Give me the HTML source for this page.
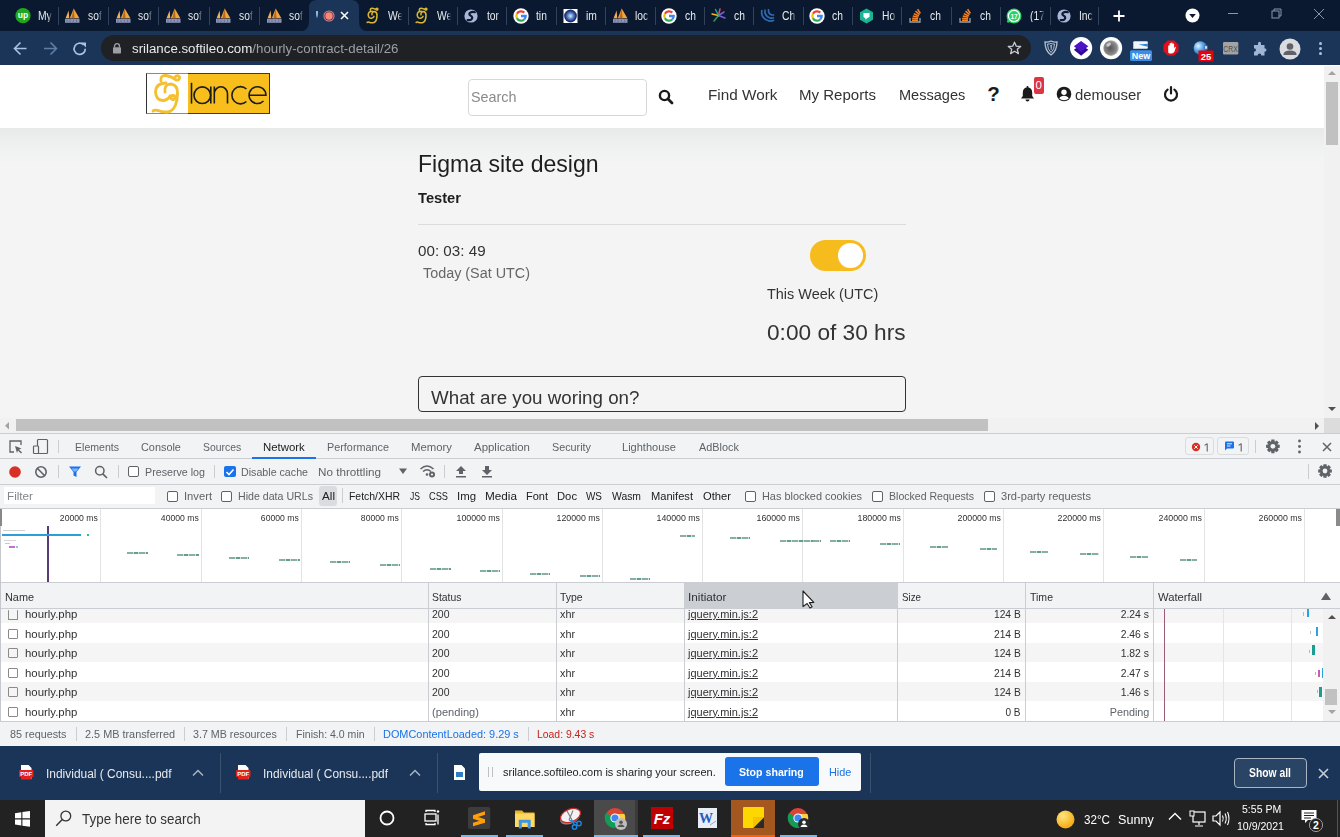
<!DOCTYPE html>
<html><head><meta charset="utf-8"><style>
*{margin:0;padding:0;box-sizing:border-box}
html,body{width:1340px;height:837px;overflow:hidden;background:#fff}
body{position:relative;font-family:"Liberation Sans",sans-serif}
.a{position:absolute}
.t{position:absolute;white-space:nowrap;line-height:1}
svg{position:absolute;overflow:visible}
</style></head><body>
<div class="a" style="left:0px;top:0px;width:1340px;height:31.2px;background:#0a1930;"></div>
<svg style="left:299px;top:0" width="70" height="32"><path d="M0 31.5 Q10 31.5 10 21.5 L10 8 Q10 0 18 0 L52 0 Q60 0 60 8 L60 21.5 Q60 31.5 70 31.5 Z" fill="#1b3558"/></svg>
<div class="a" style="left:57.5px;top:7px;width:1.2px;height:18px;background:#33435b;"></div>
<div class="a" style="left:107.5px;top:7px;width:1.2px;height:18px;background:#33435b;"></div>
<div class="a" style="left:157.5px;top:7px;width:1.2px;height:18px;background:#33435b;"></div>
<div class="a" style="left:208.5px;top:7px;width:1.2px;height:18px;background:#33435b;"></div>
<div class="a" style="left:258.5px;top:7px;width:1.2px;height:18px;background:#33435b;"></div>
<div class="a" style="left:407.5px;top:7px;width:1.2px;height:18px;background:#33435b;"></div>
<div class="a" style="left:456.5px;top:7px;width:1.2px;height:18px;background:#33435b;"></div>
<div class="a" style="left:505.5px;top:7px;width:1.2px;height:18px;background:#33435b;"></div>
<div class="a" style="left:555.5px;top:7px;width:1.2px;height:18px;background:#33435b;"></div>
<div class="a" style="left:604.5px;top:7px;width:1.2px;height:18px;background:#33435b;"></div>
<div class="a" style="left:654.5px;top:7px;width:1.2px;height:18px;background:#33435b;"></div>
<div class="a" style="left:703.5px;top:7px;width:1.2px;height:18px;background:#33435b;"></div>
<div class="a" style="left:752.5px;top:7px;width:1.2px;height:18px;background:#33435b;"></div>
<div class="a" style="left:802.5px;top:7px;width:1.2px;height:18px;background:#33435b;"></div>
<div class="a" style="left:851.5px;top:7px;width:1.2px;height:18px;background:#33435b;"></div>
<div class="a" style="left:900.5px;top:7px;width:1.2px;height:18px;background:#33435b;"></div>
<div class="a" style="left:950.5px;top:7px;width:1.2px;height:18px;background:#33435b;"></div>
<div class="a" style="left:999.5px;top:7px;width:1.2px;height:18px;background:#33435b;"></div>
<div class="a" style="left:1049.5px;top:7px;width:1.2px;height:18px;background:#33435b;"></div>
<div class="a" style="left:1097.5px;top:7px;width:1.2px;height:18px;background:#33435b;"></div>
<div id="t1" class="t" style="top:9.64px;font-size:12px;color:#e8eaed;left:37.6px;width:16.5px;overflow:hidden;-webkit-mask-image:linear-gradient(to right,#000 66%,transparent 98%);transform:scaleX(0.86);transform-origin:left 0;">My</div>
<div id="t2" class="t" style="top:9.64px;font-size:12px;color:#e8eaed;left:87.6px;width:16.5px;overflow:hidden;-webkit-mask-image:linear-gradient(to right,#000 66%,transparent 98%);transform:scaleX(0.86);transform-origin:left 0;">sof</div>
<div id="t3" class="t" style="top:9.64px;font-size:12px;color:#e8eaed;left:137.9px;width:16.5px;overflow:hidden;-webkit-mask-image:linear-gradient(to right,#000 66%,transparent 98%);transform:scaleX(0.86);transform-origin:left 0;">sof</div>
<div id="t4" class="t" style="top:9.64px;font-size:12px;color:#e8eaed;left:188.3px;width:16.5px;overflow:hidden;-webkit-mask-image:linear-gradient(to right,#000 66%,transparent 98%);transform:scaleX(0.86);transform-origin:left 0;">sof</div>
<div id="t5" class="t" style="top:9.64px;font-size:12px;color:#e8eaed;left:238.70000000000002px;width:16.5px;overflow:hidden;-webkit-mask-image:linear-gradient(to right,#000 66%,transparent 98%);transform:scaleX(0.86);transform-origin:left 0;">sof</div>
<div id="t6" class="t" style="top:9.64px;font-size:12px;color:#e8eaed;left:288.90000000000003px;width:16.5px;overflow:hidden;-webkit-mask-image:linear-gradient(to right,#000 66%,transparent 98%);transform:scaleX(0.86);transform-origin:left 0;">sof</div>
<div id="t7" class="t" style="top:9.64px;font-size:12px;color:#e8eaed;left:387.90000000000003px;width:16.5px;overflow:hidden;-webkit-mask-image:linear-gradient(to right,#000 66%,transparent 98%);transform:scaleX(0.86);transform-origin:left 0;">We</div>
<div id="t8" class="t" style="top:9.64px;font-size:12px;color:#e8eaed;left:437.2px;width:16.5px;overflow:hidden;-webkit-mask-image:linear-gradient(to right,#000 66%,transparent 98%);transform:scaleX(0.86);transform-origin:left 0;">We</div>
<div id="t9" class="t" style="top:9.64px;font-size:12px;color:#e8eaed;left:486.7px;width:16.5px;overflow:hidden;-webkit-mask-image:linear-gradient(to right,#000 66%,transparent 98%);transform:scaleX(0.86);transform-origin:left 0;">tor</div>
<div id="t10" class="t" style="top:9.64px;font-size:12px;color:#e8eaed;left:536.1999999999999px;width:16.5px;overflow:hidden;-webkit-mask-image:linear-gradient(to right,#000 66%,transparent 98%);transform:scaleX(0.86);transform-origin:left 0;">tin</div>
<div id="t11" class="t" style="top:9.64px;font-size:12px;color:#e8eaed;left:585.6999999999999px;width:16.5px;overflow:hidden;-webkit-mask-image:linear-gradient(to right,#000 66%,transparent 98%);transform:scaleX(0.86);transform-origin:left 0;">im</div>
<div id="t12" class="t" style="top:9.64px;font-size:12px;color:#e8eaed;left:635.0999999999999px;width:16.5px;overflow:hidden;-webkit-mask-image:linear-gradient(to right,#000 66%,transparent 98%);transform:scaleX(0.86);transform-origin:left 0;">loc</div>
<div id="t13" class="t" style="top:9.64px;font-size:12px;color:#e8eaed;left:684.6999999999999px;width:16.5px;overflow:hidden;-webkit-mask-image:linear-gradient(to right,#000 66%,transparent 98%);transform:scaleX(0.86);transform-origin:left 0;">ch</div>
<div id="t14" class="t" style="top:9.64px;font-size:12px;color:#e8eaed;left:733.6999999999999px;width:16.5px;overflow:hidden;-webkit-mask-image:linear-gradient(to right,#000 66%,transparent 98%);transform:scaleX(0.86);transform-origin:left 0;">ch</div>
<div id="t15" class="t" style="top:9.64px;font-size:12px;color:#e8eaed;left:782.4px;width:16.5px;overflow:hidden;-webkit-mask-image:linear-gradient(to right,#000 66%,transparent 98%);transform:scaleX(0.86);transform-origin:left 0;">Ch</div>
<div id="t16" class="t" style="top:9.64px;font-size:12px;color:#e8eaed;left:832.1999999999999px;width:16.5px;overflow:hidden;-webkit-mask-image:linear-gradient(to right,#000 66%,transparent 98%);transform:scaleX(0.86);transform-origin:left 0;">ch</div>
<div id="t17" class="t" style="top:9.64px;font-size:12px;color:#e8eaed;left:881.5999999999999px;width:16.5px;overflow:hidden;-webkit-mask-image:linear-gradient(to right,#000 66%,transparent 98%);transform:scaleX(0.86);transform-origin:left 0;">Ho</div>
<div id="t18" class="t" style="top:9.64px;font-size:12px;color:#e8eaed;left:930.3px;width:16.5px;overflow:hidden;-webkit-mask-image:linear-gradient(to right,#000 66%,transparent 98%);transform:scaleX(0.86);transform-origin:left 0;">ch</div>
<div id="t19" class="t" style="top:9.64px;font-size:12px;color:#e8eaed;left:979.9px;width:16.5px;overflow:hidden;-webkit-mask-image:linear-gradient(to right,#000 66%,transparent 98%);transform:scaleX(0.86);transform-origin:left 0;">ch</div>
<div id="t20" class="t" style="top:9.64px;font-size:12px;color:#e8eaed;left:1029.8px;width:16.5px;overflow:hidden;-webkit-mask-image:linear-gradient(to right,#000 66%,transparent 98%);transform:scaleX(0.86);transform-origin:left 0;">(17</div>
<div id="t21" class="t" style="top:9.64px;font-size:12px;color:#e8eaed;left:1078.8px;width:16.5px;overflow:hidden;-webkit-mask-image:linear-gradient(to right,#000 66%,transparent 98%);transform:scaleX(0.86);transform-origin:left 0;">Inc</div>
<div class="a" style="left:0px;top:31.2px;width:1340px;height:34.3px;background:#1b3558;"></div>
<div class="a" style="left:101px;top:35.3px;width:930px;height:25.5px;background:#202124;border-radius:13px;"></div>
<div id="t22" class="t" style="top:42.72px;font-size:12.5px;color:#e8eaed;left:132px;transform:scaleX(1.0625);transform-origin:left 0;">srilance.softileo.com<span style="color:#9aa0a6">/hourly-contract-detail/26</span></div>
<div class="a" style="left:0px;top:65.5px;width:1324px;height:62.5px;background:#ffffff;"></div>
<div class="a" style="left:0px;top:128px;width:1324px;height:290px;background:#f4f4f4;"></div>
<div class="a" style="left:0px;top:128px;width:1324px;height:36px;background:linear-gradient(#e8eaea,#eef0f0 40%,#f4f4f4);"></div>
<div class="a" style="left:146px;top:72.5px;width:124px;height:41px;background:#ffffff;border:1px solid #333;border-top-color:#8a8a8a;border-bottom-color:#8a8a8a;"></div>
<div class="a" style="left:188px;top:72.5px;width:82px;height:1px;background:#4a3a10;"></div>
<div class="a" style="left:188px;top:112.5px;width:82px;height:1px;background:#4a3a10;"></div>
<div class="a" style="left:188px;top:73.5px;width:81px;height:39px;background:#f8bf1c;"></div>
<div class="a" style="left:468px;top:79px;width:179px;height:36.5px;background:#ffffff;border:1px solid #d8d8d8;border-radius:4px;"></div>
<div id="t23" class="t" style="top:89.73px;font-size:14.5px;color:#8a8a8a;left:470.5px;transform:scaleX(0.9901);transform-origin:left 0;">Search</div>
<div id="t24" class="t" style="top:87.65px;font-size:14px;color:#333;left:707.6px;transform:scaleX(1.0921);transform-origin:left 0;">Find Work</div>
<div id="t25" class="t" style="top:87.65px;font-size:14px;color:#333;left:799.3px;transform:scaleX(1.0744);transform-origin:left 0;">My Reports</div>
<div id="t26" class="t" style="top:87.65px;font-size:14px;color:#333;left:898.7px;transform:scaleX(1.0390);transform-origin:left 0;">Messages</div>
<div id="t27" class="t" style="top:87.65px;font-size:14px;color:#333;left:1074.8px;transform:scaleX(1.0632);transform-origin:left 0;">demouser</div>
<div id="t28" class="t" style="top:152.48px;font-size:24px;color:#1e1e1e;left:418.4px;transform:scaleX(0.9602);transform-origin:left 0;">Figma site design</div>
<div id="t29" class="t" style="top:190.30px;font-size:15px;color:#1e1e1e;font-weight:700;left:418.4px;transform:scaleX(0.9790);transform-origin:left 0;">Tester</div>
<div class="a" style="left:418px;top:223.5px;width:488px;height:1px;background:#dcdcdc;"></div>
<div id="t30" class="t" style="top:244.15px;font-size:14px;color:#333;left:418.4px;transform:scaleX(1.0854);transform-origin:left 0;">00: 03: 49</div>
<div id="t31" class="t" style="top:266.15px;font-size:14px;color:#666;left:423px;transform:scaleX(1.0264);transform-origin:left 0;">Today (Sat UTC)</div>
<div class="a" style="left:810.3px;top:240px;width:56px;height:31.4px;background:#f6bc1e;border-radius:16px;"></div>
<div class="a" style="left:838.2px;top:243.4px;width:24.4px;height:24.4px;border-radius:50%;background:#fff"></div>
<div id="t32" class="t" style="top:285.90px;font-size:15px;color:#333;left:766.8px;transform:scaleX(0.9622);transform-origin:left 0;">This Week (UTC)</div>
<div id="t33" class="t" style="top:323.00px;font-size:21.5px;color:#333;left:767px;transform:scaleX(1.0541);transform-origin:left 0;">0:00 of 30 hrs</div>
<div class="a" style="left:418px;top:376px;width:488px;height:36.4px;background:#f4f4f4;border:1.5px solid #333;border-radius:4px;"></div>
<div id="t34" class="t" style="top:389.99px;font-size:17.5px;color:#333;left:431.2px;transform:scaleX(1.0716);transform-origin:left 0;">What are you woring on?</div>
<div class="a" style="left:1324px;top:65.5px;width:16px;height:352.5px;background:#f1f1f1;"></div>
<div class="a" style="left:1326px;top:82px;width:12px;height:63px;background:#c1c1c1;"></div>
<div class="a" style="left:0px;top:418px;width:1324px;height:15px;background:#f1f1f1;"></div>
<div class="a" style="left:16px;top:419.1px;width:972px;height:12.2px;background:#c1c1c1;"></div>
<div class="a" style="left:1324px;top:418px;width:16px;height:15px;background:#dcdcdc;"></div>
<div class="a" style="left:0px;top:433px;width:1340px;height:313.3px;background:#f1f3f4;"></div>
<div class="a" style="left:0px;top:433px;width:1340px;height:1px;background:#cacdd1;"></div>
<div class="a" style="left:0px;top:458px;width:1340px;height:1px;background:#cacdd1;"></div>
<div class="a" style="left:0px;top:483.5px;width:1340px;height:1px;background:#cacdd1;"></div>
<div id="t35" class="t" style="top:441.99px;font-size:11px;color:#5f6368;left:75px;transform:scaleX(0.9595);transform-origin:left 0;">Elements</div>
<div id="t36" class="t" style="top:441.99px;font-size:11px;color:#5f6368;left:140.8px;transform:scaleX(0.9886);transform-origin:left 0;">Console</div>
<div id="t37" class="t" style="top:441.99px;font-size:11px;color:#5f6368;left:202.6px;transform:scaleX(0.9440);transform-origin:left 0;">Sources</div>
<div id="t38" class="t" style="top:441.99px;font-size:11px;color:#202124;left:263px;transform:scaleX(1.0361);transform-origin:left 0;">Network</div>
<div id="t39" class="t" style="top:441.99px;font-size:11px;color:#5f6368;left:327px;transform:scaleX(0.9844);transform-origin:left 0;">Performance</div>
<div id="t40" class="t" style="top:441.99px;font-size:11px;color:#5f6368;left:411px;transform:scaleX(1.0319);transform-origin:left 0;">Memory</div>
<div id="t41" class="t" style="top:441.99px;font-size:11px;color:#5f6368;left:474px;transform:scaleX(1.0403);transform-origin:left 0;">Application</div>
<div id="t42" class="t" style="top:441.99px;font-size:11px;color:#5f6368;left:552px;transform:scaleX(0.9811);transform-origin:left 0;">Security</div>
<div id="t43" class="t" style="top:441.99px;font-size:11px;color:#5f6368;left:622px;transform:scaleX(1.0032);transform-origin:left 0;">Lighthouse</div>
<div id="t44" class="t" style="top:441.99px;font-size:11px;color:#5f6368;left:698.6px;transform:scaleX(0.9886);transform-origin:left 0;">AdBlock</div>
<div class="a" style="left:252px;top:457px;width:64.4px;height:2px;background:#1a73e8;"></div>
<div id="t45" class="t" style="top:466.59px;font-size:11px;color:#5f6368;left:145px;transform:scaleX(0.9714);transform-origin:left 0;">Preserve log</div>
<div id="t46" class="t" style="top:466.59px;font-size:11px;color:#5f6368;left:241px;transform:scaleX(0.9697);transform-origin:left 0;">Disable cache</div>
<div id="t47" class="t" style="top:466.59px;font-size:11px;color:#5f6368;left:318px;transform:scaleX(1.0622);transform-origin:left 0;">No throttling</div>
<div class="a" style="left:4px;top:487px;width:151px;height:16.7px;background:#ffffff;"></div>
<div id="t48" class="t" style="top:491.39px;font-size:11px;color:#80868b;left:7px;transform:scaleX(1.0633);transform-origin:left 0;">Filter</div>
<div id="t49" class="t" style="top:491.39px;font-size:11px;color:#5f6368;left:184px;transform:scaleX(1.0176);transform-origin:left 0;">Invert</div>
<div id="t50" class="t" style="top:491.39px;font-size:11px;color:#5f6368;left:238px;transform:scaleX(0.9658);transform-origin:left 0;">Hide data URLs</div>
<div class="a" style="left:319.3px;top:486.4px;width:18px;height:19.6px;background:#dadce0;border-radius:3px;"></div>
<div id="t51" class="t" style="top:491.39px;font-size:11px;color:#202124;left:321.5px;transform:scaleX(1.0626);transform-origin:left 0;">All</div>
<div id="t52" class="t" style="top:491.39px;font-size:11px;color:#202124;left:349px;transform:scaleX(0.9480);transform-origin:left 0;">Fetch/XHR</div>
<div id="t53" class="t" style="top:491.39px;font-size:11px;color:#202124;left:410px;transform:scaleX(0.7786);transform-origin:left 0;">JS</div>
<div id="t54" class="t" style="top:491.39px;font-size:11px;color:#202124;left:429px;transform:scaleX(0.8398);transform-origin:left 0;">CSS</div>
<div id="t55" class="t" style="top:491.39px;font-size:11px;color:#202124;left:457px;transform:scaleX(1.0358);transform-origin:left 0;">Img</div>
<div id="t56" class="t" style="top:491.39px;font-size:11px;color:#202124;left:485px;transform:scaleX(1.0678);transform-origin:left 0;">Media</div>
<div id="t57" class="t" style="top:491.39px;font-size:11px;color:#202124;left:526px;transform:scaleX(0.9993);transform-origin:left 0;">Font</div>
<div id="t58" class="t" style="top:491.39px;font-size:11px;color:#202124;left:557px;transform:scaleX(1.0224);transform-origin:left 0;">Doc</div>
<div id="t59" class="t" style="top:491.39px;font-size:11px;color:#202124;left:586px;transform:scaleX(0.9022);transform-origin:left 0;">WS</div>
<div id="t60" class="t" style="top:491.39px;font-size:11px;color:#202124;left:612px;transform:scaleX(0.9426);transform-origin:left 0;">Wasm</div>
<div id="t61" class="t" style="top:491.39px;font-size:11px;color:#202124;left:651px;transform:scaleX(1.0101);transform-origin:left 0;">Manifest</div>
<div id="t62" class="t" style="top:491.39px;font-size:11px;color:#202124;left:703px;transform:scaleX(1.0176);transform-origin:left 0;">Other</div>
<div id="t63" class="t" style="top:491.39px;font-size:11px;color:#5f6368;left:762px;transform:scaleX(0.9912);transform-origin:left 0;">Has blocked cookies</div>
<div id="t64" class="t" style="top:491.39px;font-size:11px;color:#5f6368;left:889px;transform:scaleX(0.9586);transform-origin:left 0;">Blocked Requests</div>
<div id="t65" class="t" style="top:491.39px;font-size:11px;color:#5f6368;left:1001px;transform:scaleX(1.0082);transform-origin:left 0;">3rd-party requests</div>
<div class="a" style="left:0px;top:507.5px;width:1340px;height:1px;background:#cacdd1;"></div>
<div class="a" style="left:0px;top:508.5px;width:1340px;height:74px;background:#ffffff;"></div>
<div class="a" style="left:100px;top:508.5px;width:1px;height:74px;background:#e3e3e3;"></div>
<div class="a" style="left:201px;top:508.5px;width:1px;height:74px;background:#e3e3e3;"></div>
<div class="a" style="left:301px;top:508.5px;width:1px;height:74px;background:#e3e3e3;"></div>
<div class="a" style="left:401px;top:508.5px;width:1px;height:74px;background:#e3e3e3;"></div>
<div class="a" style="left:502px;top:508.5px;width:1px;height:74px;background:#e3e3e3;"></div>
<div class="a" style="left:602px;top:508.5px;width:1px;height:74px;background:#e3e3e3;"></div>
<div class="a" style="left:702px;top:508.5px;width:1px;height:74px;background:#e3e3e3;"></div>
<div class="a" style="left:802px;top:508.5px;width:1px;height:74px;background:#e3e3e3;"></div>
<div class="a" style="left:903px;top:508.5px;width:1px;height:74px;background:#e3e3e3;"></div>
<div class="a" style="left:1003px;top:508.5px;width:1px;height:74px;background:#e3e3e3;"></div>
<div class="a" style="left:1103px;top:508.5px;width:1px;height:74px;background:#e3e3e3;"></div>
<div class="a" style="left:1204px;top:508.5px;width:1px;height:74px;background:#e3e3e3;"></div>
<div class="a" style="left:1304px;top:508.5px;width:1px;height:74px;background:#e3e3e3;"></div>
<div class="a" style="left:1336px;top:508.5px;width:4px;height:17px;background:#8a8a8a;"></div>
<div id="t66" class="t" style="top:513.73px;font-size:9.3px;color:#303030;right:1242.2px;transform:scaleX(0.9304);transform-origin:right 0;">20000 ms</div>
<div id="t67" class="t" style="top:513.73px;font-size:9.3px;color:#303030;right:1141.2px;transform:scaleX(0.9304);transform-origin:right 0;">40000 ms</div>
<div id="t68" class="t" style="top:513.73px;font-size:9.3px;color:#303030;right:1041.2px;transform:scaleX(0.9304);transform-origin:right 0;">60000 ms</div>
<div id="t69" class="t" style="top:513.73px;font-size:9.3px;color:#303030;right:941.2px;transform:scaleX(0.9304);transform-origin:right 0;">80000 ms</div>
<div id="t70" class="t" style="top:513.73px;font-size:9.3px;color:#303030;right:840.2px;transform:scaleX(0.9457);transform-origin:right 0;">100000 ms</div>
<div id="t71" class="t" style="top:513.73px;font-size:9.3px;color:#303030;right:740.2px;transform:scaleX(0.9457);transform-origin:right 0;">120000 ms</div>
<div id="t72" class="t" style="top:513.73px;font-size:9.3px;color:#303030;right:640.2px;transform:scaleX(0.9457);transform-origin:right 0;">140000 ms</div>
<div id="t73" class="t" style="top:513.73px;font-size:9.3px;color:#303030;right:540.2px;transform:scaleX(0.9457);transform-origin:right 0;">160000 ms</div>
<div id="t74" class="t" style="top:513.73px;font-size:9.3px;color:#303030;right:439.20000000000005px;transform:scaleX(0.9457);transform-origin:right 0;">180000 ms</div>
<div id="t75" class="t" style="top:513.73px;font-size:9.3px;color:#303030;right:339.20000000000005px;transform:scaleX(0.9457);transform-origin:right 0;">200000 ms</div>
<div id="t76" class="t" style="top:513.73px;font-size:9.3px;color:#303030;right:239.20000000000005px;transform:scaleX(0.9457);transform-origin:right 0;">220000 ms</div>
<div id="t77" class="t" style="top:513.73px;font-size:9.3px;color:#303030;right:138.20000000000005px;transform:scaleX(0.9457);transform-origin:right 0;">240000 ms</div>
<div id="t78" class="t" style="top:513.73px;font-size:9.3px;color:#303030;right:38.200000000000045px;transform:scaleX(0.9457);transform-origin:right 0;">260000 ms</div>
<div class="a" style="left:0px;top:582px;width:1340px;height:1px;background:#cacdd1;"></div>
<div class="a" style="left:0px;top:583px;width:1340px;height:25px;background:#f1f3f4;"></div>
<div class="a" style="left:684px;top:583px;width:213px;height:25px;background:#cbcfd3;"></div>
<div class="a" style="left:0px;top:608px;width:1340px;height:1px;background:#cacdd1;"></div>
<div id="t79" class="t" style="top:591.89px;font-size:11px;color:#303134;left:5px;transform:scaleX(0.9883);transform-origin:left 0;">Name</div>
<div id="t80" class="t" style="top:591.89px;font-size:11px;color:#303134;left:432.2px;transform:scaleX(0.9427);transform-origin:left 0;">Status</div>
<div id="t81" class="t" style="top:591.89px;font-size:11px;color:#303134;left:560px;transform:scaleX(0.9514);transform-origin:left 0;">Type</div>
<div id="t82" class="t" style="top:591.89px;font-size:11px;color:#303134;left:687.5px;transform:scaleX(1.0671);transform-origin:left 0;">Initiator</div>
<div id="t83" class="t" style="top:591.89px;font-size:11px;color:#303134;left:901.5px;transform:scaleX(0.8876);transform-origin:left 0;">Size</div>
<div id="t84" class="t" style="top:591.89px;font-size:11px;color:#303134;left:1030px;transform:scaleX(0.9565);transform-origin:left 0;">Time</div>
<div id="t85" class="t" style="top:591.89px;font-size:11px;color:#303134;left:1157.5px;transform:scaleX(1.0233);transform-origin:left 0;">Waterfall</div>
<div class="a" style="left:0px;top:608.6px;width:1323px;height:14.299999999999955px;background:#f5f5f5;"></div>
<div class="a" style="left:0px;top:622.9px;width:1323px;height:19.700000000000045px;background:#ffffff;"></div>
<div class="a" style="left:0px;top:642.6px;width:1323px;height:19.5px;background:#f5f5f5;"></div>
<div class="a" style="left:0px;top:662.1px;width:1323px;height:19.600000000000023px;background:#ffffff;"></div>
<div class="a" style="left:0px;top:681.7px;width:1323px;height:19.399999999999977px;background:#f5f5f5;"></div>
<div class="a" style="left:0px;top:701.1px;width:1323px;height:19.699999999999932px;background:#ffffff;"></div>
<div class="a" style="left:428px;top:583px;width:1px;height:138px;background:#cacdd1;"></div>
<div class="a" style="left:556px;top:583px;width:1px;height:138px;background:#cacdd1;"></div>
<div class="a" style="left:684px;top:583px;width:1px;height:138px;background:#cacdd1;"></div>
<div class="a" style="left:897px;top:583px;width:1px;height:138px;background:#cacdd1;"></div>
<div class="a" style="left:1025px;top:583px;width:1px;height:138px;background:#cacdd1;"></div>
<div class="a" style="left:1153px;top:583px;width:1px;height:138px;background:#cacdd1;"></div>
<div class="a" style="left:1223px;top:608.6px;width:1px;height:112.4px;background:#e5e5e5;"></div>
<div class="a" style="left:1291px;top:608.6px;width:1px;height:112.4px;background:#e5e5e5;"></div>
<div class="a" style="left:1163.6px;top:608.6px;width:1.7px;height:112.2px;background:#9c5a7c;"></div>
<div id="t86" class="t" style="top:609.19px;font-size:11px;color:#303134;left:24.6px;transform:scaleX(1.0363);transform-origin:left 0;">hourly.php</div>
<div id="t87" class="t" style="top:609.19px;font-size:11px;color:#303134;left:432.2px;transform:scaleX(0.9532);transform-origin:left 0;">200</div>
<div id="t88" class="t" style="top:609.19px;font-size:11px;color:#303134;left:560px;transform:scaleX(0.9816);transform-origin:left 0;">xhr</div>
<div id="t89" class="t" style="top:609.19px;font-size:11px;color:#303134;left:687.5px;transform:scaleX(0.9984);transform-origin:left 0;"><u>jquery.min.js:2</u></div>
<div id="t90" class="t" style="top:609.19px;font-size:11px;color:#303134;right:319px;transform:scaleX(0.9322);transform-origin:right 0;">124 B</div>
<div id="t91" class="t" style="top:609.19px;font-size:11px;color:#303134;right:191px;transform:scaleX(0.9443);transform-origin:right 0;">2.24 s</div>
<div class="a" style="left:8px;top:609.5px;width:10px;height:10px;background:transparent;border:1px solid #8a8a8a;border-top:none;border-radius:1px;"></div>
<div id="t92" class="t" style="top:628.59px;font-size:11px;color:#303134;left:24.6px;transform:scaleX(1.0363);transform-origin:left 0;">hourly.php</div>
<div id="t93" class="t" style="top:628.59px;font-size:11px;color:#303134;left:432.2px;transform:scaleX(0.9532);transform-origin:left 0;">200</div>
<div id="t94" class="t" style="top:628.59px;font-size:11px;color:#303134;left:560px;transform:scaleX(0.9816);transform-origin:left 0;">xhr</div>
<div id="t95" class="t" style="top:628.59px;font-size:11px;color:#303134;left:687.5px;transform:scaleX(0.9984);transform-origin:left 0;"><u>jquery.min.js:2</u></div>
<div id="t96" class="t" style="top:628.59px;font-size:11px;color:#303134;right:319px;transform:scaleX(0.9322);transform-origin:right 0;">214 B</div>
<div id="t97" class="t" style="top:628.59px;font-size:11px;color:#303134;right:191px;transform:scaleX(0.9443);transform-origin:right 0;">2.46 s</div>
<div class="a" style="left:8px;top:628.9px;width:10px;height:10px;background:transparent;border:1px solid #8a8a8a;border-radius:1px;"></div>
<div id="t98" class="t" style="top:648.09px;font-size:11px;color:#303134;left:24.6px;transform:scaleX(1.0363);transform-origin:left 0;">hourly.php</div>
<div id="t99" class="t" style="top:648.09px;font-size:11px;color:#303134;left:432.2px;transform:scaleX(0.9532);transform-origin:left 0;">200</div>
<div id="t100" class="t" style="top:648.09px;font-size:11px;color:#303134;left:560px;transform:scaleX(0.9816);transform-origin:left 0;">xhr</div>
<div id="t101" class="t" style="top:648.09px;font-size:11px;color:#303134;left:687.5px;transform:scaleX(0.9984);transform-origin:left 0;"><u>jquery.min.js:2</u></div>
<div id="t102" class="t" style="top:648.09px;font-size:11px;color:#303134;right:319px;transform:scaleX(0.9322);transform-origin:right 0;">124 B</div>
<div id="t103" class="t" style="top:648.09px;font-size:11px;color:#303134;right:191px;transform:scaleX(0.9443);transform-origin:right 0;">1.82 s</div>
<div class="a" style="left:8px;top:648.4px;width:10px;height:10px;background:transparent;border:1px solid #8a8a8a;border-radius:1px;"></div>
<div id="t104" class="t" style="top:667.59px;font-size:11px;color:#303134;left:24.6px;transform:scaleX(1.0363);transform-origin:left 0;">hourly.php</div>
<div id="t105" class="t" style="top:667.59px;font-size:11px;color:#303134;left:432.2px;transform:scaleX(0.9532);transform-origin:left 0;">200</div>
<div id="t106" class="t" style="top:667.59px;font-size:11px;color:#303134;left:560px;transform:scaleX(0.9816);transform-origin:left 0;">xhr</div>
<div id="t107" class="t" style="top:667.59px;font-size:11px;color:#303134;left:687.5px;transform:scaleX(0.9984);transform-origin:left 0;"><u>jquery.min.js:2</u></div>
<div id="t108" class="t" style="top:667.59px;font-size:11px;color:#303134;right:319px;transform:scaleX(0.9322);transform-origin:right 0;">214 B</div>
<div id="t109" class="t" style="top:667.59px;font-size:11px;color:#303134;right:191px;transform:scaleX(0.9443);transform-origin:right 0;">2.47 s</div>
<div class="a" style="left:8px;top:667.9px;width:10px;height:10px;background:transparent;border:1px solid #8a8a8a;border-radius:1px;"></div>
<div id="t110" class="t" style="top:687.09px;font-size:11px;color:#303134;left:24.6px;transform:scaleX(1.0363);transform-origin:left 0;">hourly.php</div>
<div id="t111" class="t" style="top:687.09px;font-size:11px;color:#303134;left:432.2px;transform:scaleX(0.9532);transform-origin:left 0;">200</div>
<div id="t112" class="t" style="top:687.09px;font-size:11px;color:#303134;left:560px;transform:scaleX(0.9816);transform-origin:left 0;">xhr</div>
<div id="t113" class="t" style="top:687.09px;font-size:11px;color:#303134;left:687.5px;transform:scaleX(0.9984);transform-origin:left 0;"><u>jquery.min.js:2</u></div>
<div id="t114" class="t" style="top:687.09px;font-size:11px;color:#303134;right:319px;transform:scaleX(0.9322);transform-origin:right 0;">124 B</div>
<div id="t115" class="t" style="top:687.09px;font-size:11px;color:#303134;right:191px;transform:scaleX(0.9443);transform-origin:right 0;">1.46 s</div>
<div class="a" style="left:8px;top:687.4px;width:10px;height:10px;background:transparent;border:1px solid #8a8a8a;border-radius:1px;"></div>
<div id="t116" class="t" style="top:706.59px;font-size:11px;color:#303134;left:24.6px;transform:scaleX(1.0363);transform-origin:left 0;">hourly.php</div>
<div id="t117" class="t" style="top:706.59px;font-size:11px;color:#5f6368;left:432.2px;transform:scaleX(1.0111);transform-origin:left 0;">(pending)</div>
<div id="t118" class="t" style="top:706.59px;font-size:11px;color:#303134;left:560px;transform:scaleX(0.9816);transform-origin:left 0;">xhr</div>
<div id="t119" class="t" style="top:706.59px;font-size:11px;color:#303134;left:687.5px;transform:scaleX(0.9984);transform-origin:left 0;"><u>jquery.min.js:2</u></div>
<div id="t120" class="t" style="top:706.59px;font-size:11px;color:#303134;right:319px;transform:scaleX(0.9143);transform-origin:right 0;">0 B</div>
<div id="t121" class="t" style="top:706.59px;font-size:11px;color:#5f6368;right:191px;transform:scaleX(0.9833);transform-origin:right 0;">Pending</div>
<div class="a" style="left:8px;top:706.9px;width:10px;height:10px;background:transparent;border:1px solid #8a8a8a;border-radius:1px;"></div>
<div class="a" style="left:0px;top:721px;width:1340px;height:1px;background:#cacdd1;"></div>
<div class="a" style="left:0px;top:508px;width:1px;height:213px;background:#c4c7cb;"></div>
<div id="t122" class="t" style="top:728.99px;font-size:11px;color:#5f6368;left:10.25px;transform:scaleX(0.9829);transform-origin:left 0;">85 requests</div>
<div id="t123" class="t" style="top:728.99px;font-size:11px;color:#5f6368;left:85px;transform:scaleX(0.9880);transform-origin:left 0;">2.5 MB transferred</div>
<div id="t124" class="t" style="top:728.99px;font-size:11px;color:#5f6368;left:193.25px;transform:scaleX(0.9715);transform-origin:left 0;">3.7 MB resources</div>
<div id="t125" class="t" style="top:728.99px;font-size:11px;color:#5f6368;left:295.7px;transform:scaleX(0.9590);transform-origin:left 0;">Finish: 4.0 min</div>
<div id="t126" class="t" style="top:728.99px;font-size:11px;color:#1a73e8;left:382.8px;transform:scaleX(0.9914);transform-origin:left 0;">DOMContentLoaded: 9.29 s</div>
<div id="t127" class="t" style="top:728.99px;font-size:11px;color:#c5221f;left:536.9px;transform:scaleX(0.9461);transform-origin:left 0;">Load: 9.43 s</div>
<div class="a" style="left:0px;top:746.3px;width:1340px;height:53.7px;background:#1b3558;"></div>
<div id="t128" class="t" style="top:767.92px;font-size:12.5px;color:#e8eaed;left:45.5px;transform:scaleX(0.9556);transform-origin:left 0;">Individual ( Consu....pdf</div>
<div id="t129" class="t" style="top:767.92px;font-size:12.5px;color:#e8eaed;left:262.5px;transform:scaleX(0.9518);transform-origin:left 0;">Individual ( Consu....pdf</div>
<div class="a" style="left:220px;top:753px;width:1px;height:40px;background:#3a5270;"></div>
<div class="a" style="left:437px;top:753px;width:1px;height:40px;background:#3a5270;"></div>
<div class="a" style="left:870px;top:753px;width:1px;height:40px;background:#3a5270;"></div>
<div class="a" style="left:478.6px;top:752.6px;width:382.4px;height:38.9px;background:#f8f9fa;border-radius:2px;"></div>
<div id="t130" class="t" style="top:766.97px;font-size:11.5px;color:#202124;left:503px;transform:scaleX(0.9535);transform-origin:left 0;">srilance.softileo.com is sharing your screen.</div>
<div class="a" style="left:725px;top:757.2px;width:93.8px;height:29.1px;background:#1a73e8;border-radius:3px;"></div>
<div id="t131" class="t" style="top:766.77px;font-size:11.5px;color:#ffffff;font-weight:700;left:739px;transform:scaleX(0.9220);transform-origin:left 0;">Stop sharing</div>
<div id="t132" class="t" style="top:766.97px;font-size:11.5px;color:#1a73e8;left:828.6px;transform:scaleX(0.9469);transform-origin:left 0;">Hide</div>
<div class="a" style="left:1234px;top:758px;width:72.6px;height:29.6px;background:#2a4465;border:1px solid #aab4c2;border-radius:4px;"></div>
<div id="t133" class="t" style="top:766.84px;font-size:12px;color:#ffffff;font-weight:700;left:1249px;transform:scaleX(0.8626);transform-origin:left 0;">Show all</div>
<div class="a" style="left:0px;top:800px;width:1340px;height:37px;background:#222222;"></div>
<div class="a" style="left:45px;top:800px;width:320px;height:37px;background:#f3f3f3;"></div>
<div id="t134" class="t" style="top:812.35px;font-size:14px;color:#333;left:82px;transform:scaleX(0.9584);transform-origin:left 0;">Type here to search</div>
<div id="t135" class="t" style="top:813.00px;font-size:13px;color:#ffffff;left:1083.7px;transform:scaleX(0.8951);transform-origin:left 0;">32°C</div>
<div id="t136" class="t" style="top:813.00px;font-size:13px;color:#ffffff;left:1118px;transform:scaleX(0.9681);transform-origin:left 0;">Sunny</div>
<div id="t137" class="t" style="top:804.27px;font-size:11.5px;color:#ffffff;left:1241.5px;transform:scaleX(0.9153);transform-origin:left 0;">5:55 PM</div>
<div id="t138" class="t" style="top:821.27px;font-size:11.5px;color:#ffffff;left:1237px;transform:scaleX(0.9185);transform-origin:left 0;">10/9/2021</div>
<svg style="left:14.5px;top:8px;" width="16" height="16" viewBox="0 0 16 16"><circle cx="8" cy="7.7" r="7.6" fill="#1fa81f"/><text x="8" y="10.3" font-size="8.5" font-family="Liberation Sans" font-weight="700" fill="#fff" text-anchor="middle">up</text></svg>
<svg style="left:64.3px;top:7px;" width="17" height="17" viewBox="0 0 17 17"><path d="M1.6 11.2 L4.6 3.4 L5.3 11.2Z" fill="#f2b054"/><path d="M5.8 11.2 L9.7 1.6 L15.4 11.2Z" fill="#f5a43a"/><path d="M7.4 11.2 L9.7 1.6 L10.6 11.2Z" fill="#b86a1c"/><rect x="1" y="11.8" width="14.5" height="4" fill="#8d93b4"/><path d="M3 12.5V15M6 12.5V15M9.3 12.5V15M12.6 12.5V15" stroke="#5a6388" stroke-width="0.7"/></svg>
<svg style="left:114.6px;top:7px;" width="17" height="17" viewBox="0 0 17 17"><path d="M1.6 11.2 L4.6 3.4 L5.3 11.2Z" fill="#f2b054"/><path d="M5.8 11.2 L9.7 1.6 L15.4 11.2Z" fill="#f5a43a"/><path d="M7.4 11.2 L9.7 1.6 L10.6 11.2Z" fill="#b86a1c"/><rect x="1" y="11.8" width="14.5" height="4" fill="#8d93b4"/><path d="M3 12.5V15M6 12.5V15M9.3 12.5V15M12.6 12.5V15" stroke="#5a6388" stroke-width="0.7"/></svg>
<svg style="left:165px;top:7px;" width="17" height="17" viewBox="0 0 17 17"><path d="M1.6 11.2 L4.6 3.4 L5.3 11.2Z" fill="#f2b054"/><path d="M5.8 11.2 L9.7 1.6 L15.4 11.2Z" fill="#f5a43a"/><path d="M7.4 11.2 L9.7 1.6 L10.6 11.2Z" fill="#b86a1c"/><rect x="1" y="11.8" width="14.5" height="4" fill="#8d93b4"/><path d="M3 12.5V15M6 12.5V15M9.3 12.5V15M12.6 12.5V15" stroke="#5a6388" stroke-width="0.7"/></svg>
<svg style="left:215.4px;top:7px;" width="17" height="17" viewBox="0 0 17 17"><path d="M1.6 11.2 L4.6 3.4 L5.3 11.2Z" fill="#f2b054"/><path d="M5.8 11.2 L9.7 1.6 L15.4 11.2Z" fill="#f5a43a"/><path d="M7.4 11.2 L9.7 1.6 L10.6 11.2Z" fill="#b86a1c"/><rect x="1" y="11.8" width="14.5" height="4" fill="#8d93b4"/><path d="M3 12.5V15M6 12.5V15M9.3 12.5V15M12.6 12.5V15" stroke="#5a6388" stroke-width="0.7"/></svg>
<svg style="left:265.6px;top:7px;" width="17" height="17" viewBox="0 0 17 17"><path d="M1.6 11.2 L4.6 3.4 L5.3 11.2Z" fill="#f2b054"/><path d="M5.8 11.2 L9.7 1.6 L15.4 11.2Z" fill="#f5a43a"/><path d="M7.4 11.2 L9.7 1.6 L10.6 11.2Z" fill="#b86a1c"/><rect x="1" y="11.8" width="14.5" height="4" fill="#8d93b4"/><path d="M3 12.5V15M6 12.5V15M9.3 12.5V15M12.6 12.5V15" stroke="#5a6388" stroke-width="0.7"/></svg>
<svg style="left:611.8px;top:7px;" width="17" height="17" viewBox="0 0 17 17"><path d="M1.6 11.2 L4.6 3.4 L5.3 11.2Z" fill="#f2b054"/><path d="M5.8 11.2 L9.7 1.6 L15.4 11.2Z" fill="#f5a43a"/><path d="M7.4 11.2 L9.7 1.6 L10.6 11.2Z" fill="#b86a1c"/><rect x="1" y="11.8" width="14.5" height="4" fill="#8d93b4"/><path d="M3 12.5V15M6 12.5V15M9.3 12.5V15M12.6 12.5V15" stroke="#5a6388" stroke-width="0.7"/></svg>
<div class="a" style="left:316.2px;top:11px;width:1.6px;height:6.8px;background:linear-gradient(#a8cce0,#7aa8d0 60%,#1e4a9a);border-radius:0.5px;"></div>
<svg style="left:323.4px;top:9.7px;" width="12" height="12" viewBox="0 0 12 12"><circle cx="6" cy="6" r="5.6" fill="#c98a92"/><circle cx="6" cy="6" r="4.6" fill="#6e2434"/><circle cx="6" cy="6" r="3.7" fill="#f2897a"/></svg>
<svg style="left:340px;top:11px;" width="9" height="9" viewBox="0 0 9 9"><path d="M1 1L8 8M8 1L1 8" stroke="#fff" stroke-width="1.5"/></svg>
<svg style="left:363.6px;top:6px;" width="18" height="19" viewBox="0 0 18 19"><g transform="scale(0.4)" fill="none" stroke="#dcb72c" stroke-width="3.9" stroke-linecap="round"><path d="M16 11 Q15 5 21 5.5 Q27 6.5 31 10 Q35 10.5 34.5 7 Q33 4.5 30.5 6.5"/><path d="M21 13 Q11 13 10.5 22 Q11 31 19 30.5 Q24 29 25 26"/><path d="M20 22 Q19 14 26 14 Q33 15 32.5 24 Q32 38 25 41.5 Q19 43 13 40.5 Q9.5 39.5 8 41"/></g></svg>
<svg style="left:412.9px;top:6px;" width="18" height="19" viewBox="0 0 18 19"><g transform="scale(0.4)" fill="none" stroke="#dcb72c" stroke-width="3.9" stroke-linecap="round"><path d="M16 11 Q15 5 21 5.5 Q27 6.5 31 10 Q35 10.5 34.5 7 Q33 4.5 30.5 6.5"/><path d="M21 13 Q11 13 10.5 22 Q11 31 19 30.5 Q24 29 25 26"/><path d="M20 22 Q19 14 26 14 Q33 15 32.5 24 Q32 38 25 41.5 Q19 43 13 40.5 Q9.5 39.5 8 41"/></g></svg>
<svg style="left:464.4px;top:8.8px;" width="14" height="14" viewBox="0 0 14 14"><circle cx="7" cy="7" r="6.6" fill="#a9b7d6"/><path d="M10.8 3.2 Q8.5 2.2 6.2 3.6 Q4.3 5 6.6 6.6 Q9.2 8 7.6 10.2 Q6.3 11.6 3.6 11" fill="none" stroke="#0b1a32" stroke-width="2.2" stroke-linecap="round"/></svg>
<svg style="left:1056.5px;top:8.8px;" width="14" height="14" viewBox="0 0 14 14"><circle cx="7" cy="7" r="6.6" fill="#a9b7d6"/><path d="M10.8 3.2 Q8.5 2.2 6.2 3.6 Q4.3 5 6.6 6.6 Q9.2 8 7.6 10.2 Q6.3 11.6 3.6 11" fill="none" stroke="#0b1a32" stroke-width="2.2" stroke-linecap="round"/></svg>
<svg style="left:512.9px;top:7.5px;" width="16" height="16" viewBox="0 0 16 16"><circle cx="8" cy="8" r="7.7" fill="#fff"/><g fill="none" stroke-width="2.3"><path d="M11.3 4.6 A4.7 4.7 0 0 0 3.9 5.8" stroke="#ea4335"/><path d="M3.9 5.8 A4.7 4.7 0 0 0 3.9 10.2" stroke="#fbbc05"/><path d="M3.9 10.2 A4.7 4.7 0 0 0 11.2 11.5" stroke="#34a853"/><path d="M11.2 11.5 A4.7 4.7 0 0 0 12.7 8 H8" stroke="#4285f4"/></g></svg>
<svg style="left:661.4px;top:7.5px;" width="16" height="16" viewBox="0 0 16 16"><circle cx="8" cy="8" r="7.7" fill="#fff"/><g fill="none" stroke-width="2.3"><path d="M11.3 4.6 A4.7 4.7 0 0 0 3.9 5.8" stroke="#ea4335"/><path d="M3.9 5.8 A4.7 4.7 0 0 0 3.9 10.2" stroke="#fbbc05"/><path d="M3.9 10.2 A4.7 4.7 0 0 0 11.2 11.5" stroke="#34a853"/><path d="M11.2 11.5 A4.7 4.7 0 0 0 12.7 8 H8" stroke="#4285f4"/></g></svg>
<svg style="left:808.9px;top:7.5px;" width="16" height="16" viewBox="0 0 16 16"><circle cx="8" cy="8" r="7.7" fill="#fff"/><g fill="none" stroke-width="2.3"><path d="M11.3 4.6 A4.7 4.7 0 0 0 3.9 5.8" stroke="#ea4335"/><path d="M3.9 5.8 A4.7 4.7 0 0 0 3.9 10.2" stroke="#fbbc05"/><path d="M3.9 10.2 A4.7 4.7 0 0 0 11.2 11.5" stroke="#34a853"/><path d="M11.2 11.5 A4.7 4.7 0 0 0 12.7 8 H8" stroke="#4285f4"/></g></svg>
<svg style="left:563px;top:8.5px;" width="15" height="14" viewBox="0 0 15 14"><defs><radialGradient id="imr" cx="0.5" cy="0.5" r="0.5"><stop offset="0" stop-color="#d8e8f8"/><stop offset="0.45" stop-color="#5a86c8"/><stop offset="0.85" stop-color="#1c2c70"/><stop offset="1" stop-color="#2a3a80"/></radialGradient></defs><rect x="0.5" y="0" width="14" height="14" fill="#fff"/><circle cx="7.5" cy="7" r="6.4" fill="url(#imr)"/></svg>
<svg style="left:711px;top:8px;" width="15" height="15" viewBox="0 0 15 15"><g stroke-width="1.5" stroke-linecap="round"><path d="M7.5 7.5 L9 1" stroke="#e84a5f"/><path d="M7.5 7.5 L13 4" stroke="#7b5cd6"/><path d="M7.5 7.5 L14 10" stroke="#7b5cd6"/><path d="M7.5 7.5 L3 13" stroke="#2ca24b"/><path d="M7.5 7.5 L1 6" stroke="#f7b51e"/><path d="M7.5 7.5 L4.5 1.5" stroke="#1aa39f"/></g></svg>
<svg style="left:760px;top:8px;" width="15" height="15" viewBox="0 0 15 15"><g fill="none" stroke="#2d6db5" stroke-width="1.6"><path d="M2 2 Q0 10 9 13 Q13 13.5 14 12"/><path d="M5 1.5 Q4 8 10 10 Q12.5 10.5 14 9.5"/><path d="M8.5 1 Q8 6 12 7 Q13.5 7.2 14 6.5"/></g></svg>
<svg style="left:859px;top:7.5px;" width="15" height="16" viewBox="0 0 15 16"><path d="M7.5 0.5 L14 4.2 V11.8 L7.5 15.5 L1 11.8 V4.2Z" fill="#1ab394"/><path d="M4.5 5 H10.5 V9 L7.5 10.5 L7 12 L6 10 L4.5 9Z" fill="#fff"/></svg>
<svg style="left:908px;top:7.5px;" width="14" height="16" viewBox="0 0 14 16"><path d="M2 10 V14 H12 V10" fill="none" stroke="#9aa0a6" stroke-width="1.3"/><g stroke="#f48024" stroke-width="1.6"><path d="M4 12.2H10"/><path d="M4.2 10.2L10 10.8"/><path d="M4.8 8L10.3 9.3"/><path d="M5.8 5.6L10.8 8"/><path d="M7.5 3.2L11.6 6.6"/><path d="M9.6 1.2L12.4 5.4"/></g></svg>
<svg style="left:957.6px;top:7.5px;" width="14" height="16" viewBox="0 0 14 16"><path d="M2 10 V14 H12 V10" fill="none" stroke="#9aa0a6" stroke-width="1.3"/><g stroke="#f48024" stroke-width="1.6"><path d="M4 12.2H10"/><path d="M4.2 10.2L10 10.8"/><path d="M4.8 8L10.3 9.3"/><path d="M5.8 5.6L10.8 8"/><path d="M7.5 3.2L11.6 6.6"/><path d="M9.6 1.2L12.4 5.4"/></g></svg>
<svg style="left:1006px;top:7.5px;" width="16" height="16" viewBox="0 0 16 16"><circle cx="8" cy="8" r="7.5" fill="#25d366"/><path d="M2 14.5 L3 11" stroke="#25d366" stroke-width="2.5"/><circle cx="8" cy="8" r="5.6" fill="none" stroke="#fff" stroke-width="1.2"/><text x="8" y="10.5" font-size="6.5" font-family="Liberation Sans" font-weight="700" fill="#fff" text-anchor="middle">17</text></svg>
<svg style="left:1113px;top:10px;" width="12" height="12" viewBox="0 0 12 12"><path d="M6 0.5V11.5M0.5 6H11.5" stroke="#fff" stroke-width="1.8"/></svg>
<svg style="left:1184.5px;top:8px;" width="15" height="15" viewBox="0 0 15 15"><circle cx="7.5" cy="7.5" r="7" fill="#fff"/><path d="M4.2 6 H10.8 L7.5 10Z" fill="#0b1a32"/></svg>
<div class="a" style="left:1228px;top:13px;width:10px;height:1px;background:#8a96a8;"></div>
<svg style="left:1271px;top:8px;" width="12" height="11" viewBox="0 0 12 11"><rect x="1" y="3" width="7" height="7" fill="none" stroke="#8a96a8"/><path d="M3 3V1H10V8H8" fill="none" stroke="#8a96a8"/></svg>
<svg style="left:1313px;top:8px;" width="12" height="12" viewBox="0 0 12 12"><path d="M1 1L11 11M11 1L1 11" stroke="#8a96a8" stroke-width="1"/></svg>
<svg style="left:13px;top:41px;" width="15" height="15" viewBox="0 0 15 15"><path d="M13.5 7.5H2.5M7.5 1.5L1.5 7.5L7.5 13.5" fill="none" stroke="#a9c2e2" stroke-width="1.6"/></svg>
<svg style="left:43px;top:41px;" width="15" height="15" viewBox="0 0 15 15"><path d="M1 7.5H12.5M7.5 1.5L13.5 7.5L7.5 13.5" fill="none" stroke="#5f7ea6" stroke-width="1.6"/></svg>
<svg style="left:72px;top:40.5px;" width="16" height="16" viewBox="0 0 16 16"><path d="M13.3 7.8 A5.6 5.6 0 1 1 11.6 3.8" fill="none" stroke="#a9c2e2" stroke-width="1.7"/><path d="M9 1.5 H14 V6.5Z" fill="#a9c2e2"/></svg>
<svg style="left:112px;top:42.5px;" width="10" height="11" viewBox="0 0 10 11"><path d="M2.5 4.5 V3.2 A2.5 2.5 0 0 1 7.5 3.2 V4.5" fill="none" stroke="#9aa0a6" stroke-width="1.3"/><rect x="1" y="4.3" width="8" height="6.3" rx="0.8" fill="#9aa0a6"/></svg>
<svg style="left:1007px;top:41px;" width="15" height="14" viewBox="0 0 15 14"><path d="M7.5 1.2 L9.3 5.2 L13.7 5.5 L10.3 8.3 L11.4 12.6 L7.5 10.3 L3.6 12.6 L4.7 8.3 L1.3 5.5 L5.7 5.2Z" fill="none" stroke="#c8ccd2" stroke-width="1.3" stroke-linejoin="round"/></svg>
<svg style="left:1044px;top:40px;" width="14" height="16" viewBox="0 0 14 16"><path d="M7 1 Q10 2.5 13 2 Q13 11 7 15 Q1 11 1 2 Q4 2.5 7 1Z" fill="none" stroke="#b8c0cc" stroke-width="1.3"/><path d="M7 3.5 Q9 4.3 10.5 4 Q10.5 9.5 7 12.5 Q3.5 9.5 3.5 4 Q5 4.3 7 3.5Z" fill="none" stroke="#b8c0cc" stroke-width="1"/><path d="M6.3 5 H8 L7.5 10 H6.8Z" fill="#b8c0cc"/></svg>
<svg style="left:1070.2px;top:37.1px;" width="23" height="23" viewBox="0 0 23 23"><circle cx="11.1" cy="11.1" r="11.1" fill="#fff"/><path d="M11.1 7.5 L18.3 12.8 L11.1 18.7 L3.9 12.8Z" fill="#2e0c94"/><path d="M11.1 3.9 L18.3 9.3 L11.1 14.9 L3.9 9.3Z" fill="#4b14c4"/></svg>
<svg style="left:1099.9px;top:37.1px;" width="23" height="23" viewBox="0 0 23 23"><defs><radialGradient id="gc" cx="0.45" cy="0.5" r="0.55"><stop offset="0" stop-color="#555"/><stop offset="0.75" stop-color="#8a8a8a"/><stop offset="1" stop-color="#d0d0d0"/></radialGradient></defs><circle cx="11.1" cy="11.1" r="11.1" fill="#fff"/><circle cx="11.1" cy="11.1" r="7.8" fill="url(#gc)"/><ellipse cx="8.6" cy="7.6" rx="2.6" ry="1.6" transform="rotate(-35 8.6 7.6)" fill="#c8c8c8"/></svg>
<svg style="left:1129px;top:40px;" width="24" height="22" viewBox="0 0 24 22"><rect x="4.3" y="1.2" width="14.5" height="7.6" rx="1" fill="#f2f6fb"/><path d="M9.5 4.6 L18.8 3.8 L18.8 6.8 Z" fill="#2f86d6"/><path d="M4.3 6.5 Q6 8.8 9.5 8.8 H4.3Z" fill="#c9d8ea"/><rect x="1" y="10.2" width="22" height="10.8" rx="1.5" fill="#3b8ee6"/><text x="12" y="19" font-size="9" font-weight="700" font-family="Liberation Sans" fill="#fff" text-anchor="middle">New</text></svg>
<svg style="left:1162.5px;top:40.2px;" width="16" height="16" viewBox="0 0 16 16"><path d="M4.7 0.5 H11.3 L15.5 4.7 V11.3 L11.3 15.5 H4.7 L0.5 11.3 V4.7Z" fill="#e0101a"/><path d="M5.2 12 V6.2 Q5.2 5.3 6 5.3 Q6.6 5.3 6.6 6.2 V4 Q6.6 3.1 7.4 3.1 Q8.1 3.1 8.1 4 V3.3 Q8.1 2.4 8.9 2.4 Q9.6 2.4 9.6 3.3 V4.2 Q9.6 3.4 10.4 3.4 Q11.1 3.4 11.1 4.2 V8.5 L11.8 7.2 Q12.4 6.5 13 7 L11.5 11.5 Q10.5 13.6 8.3 13.6 Q5.2 13.6 5.2 12Z" fill="#fff"/></svg>
<svg style="left:1192px;top:38.5px;" width="22" height="24" viewBox="0 0 22 24"><defs><radialGradient id="gl" cx="0.35" cy="0.35" r="0.7"><stop offset="0" stop-color="#e8f4ff"/><stop offset="0.5" stop-color="#5aaae8"/><stop offset="1" stop-color="#1a6ab8"/></radialGradient></defs><circle cx="8.3" cy="9" r="6.7" fill="url(#gl)"/><rect x="12.3" y="6.5" width="3.5" height="4" fill="#3a78b8"/><rect x="13" y="7.2" width="2" height="2.5" fill="#d0e4f5"/><rect x="6.5" y="11.5" width="15" height="11" fill="#e8000b"/><text x="14" y="21" font-size="9.5" font-weight="700" font-family="Liberation Sans" fill="#fff" text-anchor="middle">25</text></svg>
<svg style="left:1222.5px;top:41.8px;" width="16" height="13" viewBox="0 0 16 13"><rect x="0" y="0" width="15.3" height="12.5" rx="1.2" fill="#a3a3a3"/><text x="7.6" y="9.8" font-size="8.3" font-family="Liberation Sans" fill="#505050" text-anchor="middle" textLength="14.5" lengthAdjust="spacingAndGlyphs">CRX</text></svg>
<svg style="left:1252px;top:40.5px;" width="16" height="16" viewBox="0 0 16 16"><path d="M6 2.5 Q6 0.8 7.5 0.8 Q9 0.8 9 2.5 V4 H12.5 V7.3 Q14.5 7.3 14.5 9 Q14.5 10.7 12.5 10.7 V14.5 H9.3 Q9.3 12.5 7.5 12.5 Q5.7 12.5 5.7 14.5 H2 V10.8 Q4 10.8 4 9 Q4 7.2 2 7.2 V4 H6Z" fill="#9fb6d6"/></svg>
<svg style="left:1278.5px;top:37.5px;" width="22" height="22" viewBox="0 0 22 22"><circle cx="11" cy="11" r="10.5" fill="#dadce0"/><circle cx="11" cy="8.5" r="3.3" fill="#5f6368"/><path d="M4.5 16 Q5 12.5 11 12.5 Q17 12.5 17.5 16 V17 H4.5Z" fill="#5f6368"/></svg>
<svg style="left:1317.5px;top:41px;" width="5" height="15" viewBox="0 0 5 15"><circle cx="2.5" cy="2.5" r="1.5" fill="#a9c2e2"/><circle cx="2.5" cy="7.5" r="1.5" fill="#a9c2e2"/><circle cx="2.5" cy="12.5" r="1.5" fill="#a9c2e2"/></svg>
<svg style="left:140px;top:70px;" width="140" height="50" viewBox="0 0 140 50"><g fill="none" stroke="#1c1c1c" stroke-width="1.6"><path d="M51.5 12.8V33.6"/><circle cx="62.3" cy="25.2" r="8.3"/><path d="M70.8 16.5V33.6"/><path d="M74.3 16.5V33.6M74.3 24 A6.6 7.2 0 0 1 87.5 24 V33.6"/><path d="M106.4 19 A8.6 8.6 0 1 0 106.4 31.5"/><path d="M109.2 25.2H125.9 A8.4 8.4 0 1 0 123.5 31"/></g></svg>
<svg style="left:145px;top:70px;" width="45" height="46" viewBox="0 0 45 46"><g fill="none" stroke="#f5c030" stroke-width="2.9" stroke-linecap="round"><path d="M16 11 Q15 5 21 5.5 Q27 6.5 31 10 Q35 10.5 34.5 7 Q33 4.5 30.5 6.5"/><path d="M21 13 Q11 13 10.5 22 Q11 31 19 30.5 Q24 29 25 26"/><path d="M20 22 Q19 14 26 14 Q33 15 32.5 24 Q32 38 25 41.5 Q19 43 13 40.5 Q9.5 39.5 8 41"/><circle cx="28" cy="27.5" r="2"/></g></svg>
<svg style="left:658px;top:89px;" width="16" height="16" viewBox="0 0 16 16"><circle cx="6.5" cy="6.5" r="4.6" fill="none" stroke="#1a1a1a" stroke-width="2.4"/><path d="M10 10L14 14" stroke="#1a1a1a" stroke-width="2.8" stroke-linecap="round"/></svg>
<div id="t139" class="t" style="top:83.95px;font-size:20.5px;color:#1a1a1a;font-weight:700;left:987.2px;">?</div>
<svg style="left:1020px;top:86px;" width="15" height="16" viewBox="0 0 15 16"><path d="M7.5 1.5 Q12 1.5 12.2 6.5 V10 L14 12.5 H1 L2.8 10 V6.5 Q3 1.5 7.5 1.5Z" fill="#1a1a1a"/><rect x="6.5" y="0" width="2" height="2.5" rx="1" fill="#1a1a1a"/><path d="M5.5 13.5 A2 2 0 0 0 9.5 13.5Z" fill="#1a1a1a"/></svg>
<div class="a" style="left:1033.8px;top:77.2px;width:10.2px;height:16.5px;background:#dc3545;border-radius:2px;"></div>
<div id="t140" class="t" style="top:80.27px;font-size:11.5px;color:#fff;left:1035.6px;">0</div>
<svg style="left:1056px;top:86px;" width="16" height="16" viewBox="0 0 16 16"><circle cx="8" cy="8" r="7.3" fill="#1a1a1a"/><circle cx="8" cy="6.2" r="2.7" fill="#fff"/><path d="M3.2 12.6 Q4.5 9.8 8 9.8 Q11.5 9.8 12.8 12.6 Q10.8 14.3 8 14.3 Q5.2 14.3 3.2 12.6Z" fill="#fff"/></svg>
<svg style="left:1163px;top:86px;" width="16" height="16" viewBox="0 0 16 16"><path d="M4.6 3.6 A6 6 0 1 0 11.4 3.6" fill="none" stroke="#1a1a1a" stroke-width="2.2" stroke-linecap="round"/><path d="M8 1V7.5" stroke="#1a1a1a" stroke-width="2.2" stroke-linecap="round"/></svg>
<svg style="left:1327px;top:70px;" width="10" height="6" viewBox="0 0 10 6"><path d="M1 5H9L5 1Z" fill="#a3a3a3"/></svg>
<svg style="left:1327px;top:406px;" width="10" height="6" viewBox="0 0 10 6"><path d="M1 1H9L5 5Z" fill="#505050"/></svg>
<svg style="left:4.2px;top:421px;" width="6" height="10" viewBox="0 0 6 10"><path d="M5 1V8.5L1 4.75Z" fill="#a3a3a3"/></svg>
<svg style="left:1314px;top:421px;" width="6" height="10" viewBox="0 0 6 10"><path d="M1 1V9L5 5Z" fill="#505050"/></svg>
<svg style="left:8px;top:439px;" width="15" height="15" viewBox="0 0 15 15"><path d="M6 13H2V2H13V6" fill="none" stroke="#5f6368" stroke-width="1.3"/><path d="M7 7L13.5 9.5L11 10.5L14 13.5L13 14.5L10 11.5L9 14Z" fill="#5f6368"/></svg>
<svg style="left:32px;top:438px;" width="17" height="17" viewBox="0 0 17 17"><rect x="5.5" y="1.5" width="10" height="14" rx="1" fill="none" stroke="#5f6368" stroke-width="1.2"/><rect x="1.5" y="8" width="5" height="7.5" rx="0.8" fill="#f1f3f4" stroke="#5f6368" stroke-width="1.2"/></svg>
<div class="a" style="left:58px;top:440px;width:1px;height:13px;background:#cacdd1;"></div>
<div class="a" style="left:1255px;top:440px;width:1px;height:13px;background:#cacdd1;"></div>
<svg style="left:8px;top:464.5px;" width="14" height="14" viewBox="0 0 14 14"><circle cx="7" cy="7" r="5.8" fill="#d93025"/></svg>
<svg style="left:34px;top:464.5px;" width="14" height="14" viewBox="0 0 14 14"><circle cx="7" cy="7" r="5.2" fill="none" stroke="#5f6368" stroke-width="1.6"/><path d="M3.3 3.3L10.7 10.7" stroke="#5f6368" stroke-width="1.6"/></svg>
<div class="a" style="left:58px;top:465px;width:1px;height:13px;background:#cacdd1;"></div>
<svg style="left:68px;top:465px;" width="14" height="13" viewBox="0 0 14 13"><path d="M1 1.5H13L8.5 7V12L5.5 10.5V7Z" fill="#1a73e8"/><path d="M3.5 3.5H10.5L8 6.5H6Z" fill="#8ab4f8"/></svg>
<svg style="left:93.7px;top:464.8px;" width="14" height="14" viewBox="0 0 14 14"><circle cx="5.8" cy="5.8" r="4.2" fill="none" stroke="#5f6368" stroke-width="1.5"/><path d="M8.8 8.8L13 13" stroke="#5f6368" stroke-width="1.7"/></svg>
<div class="a" style="left:118px;top:465px;width:1px;height:13px;background:#cacdd1;"></div>
<div class="a" style="left:128.3px;top:465.5px;width:11.2px;height:11.2px;background:#fff;border:1px solid #5f6368;border-radius:2px;"></div>
<div class="a" style="left:214px;top:465px;width:1px;height:13px;background:#cacdd1;"></div>
<div class="a" style="left:224px;top:465.5px;width:11.5px;height:11.5px;background:#1a73e8;border-radius:2px;"></div>
<svg style="left:224px;top:465.5px;" width="12" height="12" viewBox="0 0 12 12"><path d="M2.5 6L5 8.5L9.5 3.5" fill="none" stroke="#fff" stroke-width="1.6"/></svg>
<svg style="left:398px;top:467px;" width="10" height="8" viewBox="0 0 10 8"><path d="M1 1.5H9L5 7Z" fill="#5f6368"/></svg>
<svg style="left:419px;top:464px;" width="17" height="14" viewBox="0 0 17 14"><path d="M1.5 5 Q8 -1 14.5 5" fill="none" stroke="#5f6368" stroke-width="1.5"/><path d="M4 7.5 Q8 4 12 7.5" fill="none" stroke="#5f6368" stroke-width="1.5"/><circle cx="8" cy="10.5" r="1.3" fill="#5f6368"/><circle cx="13" cy="10.5" r="3" fill="#5f6368"/><circle cx="13" cy="10.5" r="1.1" fill="#f1f3f4"/></svg>
<div class="a" style="left:444px;top:465px;width:1px;height:13px;background:#cacdd1;"></div>
<svg style="left:455px;top:465px;" width="12" height="13" viewBox="0 0 12 13"><path d="M6 1L11 6H8V9H4V6H1Z" fill="#5f6368"/><rect x="1" y="11" width="10" height="1.5" fill="#5f6368"/></svg>
<svg style="left:481px;top:465px;" width="12" height="13" viewBox="0 0 12 13"><path d="M6 10L11 5H8V1H4V5H1Z" fill="#5f6368"/><rect x="1" y="11" width="10" height="1.5" fill="#5f6368"/></svg>
<div class="a" style="left:1308px;top:464px;width:1px;height:15px;background:#cacdd1;"></div>
<svg style="left:0px;top:0px;pointer-events:none;" width="1340" height="837" viewBox="0 0 1340 837"><path d="M1279.73 444.77 L1279.73 447.83 L1277.54 448.15 L1277.49 448.27 L1278.81 450.05 L1276.65 452.21 L1274.87 450.89 L1274.75 450.94 L1274.43 453.13 L1271.37 453.13 L1271.05 450.94 L1270.93 450.89 L1269.15 452.21 L1266.99 450.05 L1268.31 448.27 L1268.26 448.15 L1266.07 447.83 L1266.07 444.77 L1268.26 444.45 L1268.31 444.33 L1266.99 442.55 L1269.15 440.39 L1270.93 441.71 L1271.05 441.66 L1271.37 439.47 L1274.43 439.47 L1274.75 441.66 L1274.87 441.71 L1276.65 440.39 L1278.81 442.55 L1277.49 444.33 L1277.54 444.45Z" fill="#5f6368"/><circle cx="1272.9" cy="446.3" r="2.4" fill="#f1f3f4"/></svg>
<svg style="left:0px;top:0px;pointer-events:none;" width="1340" height="837" viewBox="0 0 1340 837"><path d="M1331.83 469.47 L1331.83 472.53 L1329.64 472.85 L1329.59 472.97 L1330.91 474.75 L1328.75 476.91 L1326.97 475.59 L1326.85 475.64 L1326.53 477.83 L1323.47 477.83 L1323.15 475.64 L1323.03 475.59 L1321.25 476.91 L1319.09 474.75 L1320.41 472.97 L1320.36 472.85 L1318.17 472.53 L1318.17 469.47 L1320.36 469.15 L1320.41 469.03 L1319.09 467.25 L1321.25 465.09 L1323.03 466.41 L1323.15 466.36 L1323.47 464.17 L1326.53 464.17 L1326.85 466.36 L1326.97 466.41 L1328.75 465.09 L1330.91 467.25 L1329.59 469.03 L1329.64 469.15Z" fill="#5f6368"/><circle cx="1325" cy="471" r="2.4" fill="#f1f3f4"/></svg>
<svg style="left:1297px;top:439px;" width="5" height="15" viewBox="0 0 5 15"><circle cx="2.5" cy="2" r="1.4" fill="#5f6368"/><circle cx="2.5" cy="7.5" r="1.4" fill="#5f6368"/><circle cx="2.5" cy="13" r="1.4" fill="#5f6368"/></svg>
<svg style="left:1322px;top:441.5px;" width="10" height="10" viewBox="0 0 10 10"><path d="M1 1L9 9M9 1L1 9" stroke="#5f6368" stroke-width="1.5"/></svg>
<div class="a" style="left:1185px;top:437.4px;width:29.3px;height:17.7px;background:transparent;border:1px solid #dadce0;border-radius:3px;"></div>
<svg style="left:1190.5px;top:442px;" width="10" height="10" viewBox="0 0 10 10"><circle cx="5" cy="5" r="4.2" fill="#d93025"/><path d="M3.3 3.3L6.7 6.7M6.7 3.3L3.3 6.7" stroke="#fff" stroke-width="1"/></svg>
<svg style="left:1203.5px;top:442.5px;" width="5" height="9" viewBox="0 0 5 9"><path d="M3.2 0.5V8.5M3.2 0.6L0.6 2.4" fill="none" stroke="#5f6368" stroke-width="1.1"/></svg>
<div class="a" style="left:1217.3px;top:437.4px;width:31.9px;height:17.7px;background:transparent;border:1px solid #dadce0;border-radius:3px;"></div>
<svg style="left:1224px;top:441px;" width="11" height="11" viewBox="0 0 11 11"><path d="M1 1.5 Q1 0.5 2 0.5 H9 Q10 0.5 10 1.5 V6.5 Q10 7.5 9 7.5 H3 L1 9.5Z" fill="#1a73e8"/><path d="M3 2.8H8M3 5H6.5" stroke="#fff" stroke-width="0.9"/></svg>
<svg style="left:1238px;top:442.5px;" width="5" height="9" viewBox="0 0 5 9"><path d="M3.2 0.5V8.5M3.2 0.6L0.6 2.4" fill="none" stroke="#5f6368" stroke-width="1.1"/></svg>
<div class="a" style="left:167px;top:490.5px;width:11.2px;height:11.2px;background:#fff;border:1px solid #5f6368;border-radius:2px;"></div>
<div class="a" style="left:221px;top:490.5px;width:11.2px;height:11.2px;background:#fff;border:1px solid #5f6368;border-radius:2px;"></div>
<div class="a" style="left:745px;top:490.5px;width:11.2px;height:11.2px;background:#fff;border:1px solid #5f6368;border-radius:2px;"></div>
<div class="a" style="left:872px;top:490.5px;width:11.2px;height:11.2px;background:#fff;border:1px solid #5f6368;border-radius:2px;"></div>
<div class="a" style="left:984px;top:490.5px;width:11.2px;height:11.2px;background:#fff;border:1px solid #5f6368;border-radius:2px;"></div>
<div class="a" style="left:342px;top:488px;width:1px;height:15px;background:#cacdd1;"></div>
<div class="a" style="left:0px;top:508.5px;width:2px;height:17px;background:#888;"></div>
<div class="a" style="left:46.5px;top:526px;width:2px;height:56px;background:#5b3a76;"></div>
<div class="a" style="left:2px;top:534.2px;width:79px;height:2.2px;background:#2a9fd8;"></div>
<div class="a" style="left:87px;top:534px;width:2px;height:2px;background:#44b38c;"></div>
<div class="a" style="left:3px;top:530px;width:22px;height:1px;background:#d0d0d0;"></div>
<div class="a" style="left:4px;top:540px;width:12px;height:1px;background:#d8d8d8;"></div>
<div class="a" style="left:5px;top:543px;width:5px;height:1px;background:#c8c8c8;"></div>
<div class="a" style="left:9px;top:546px;width:6px;height:1.5px;background:#c070d0;"></div>
<div class="a" style="left:16px;top:546px;width:2px;height:1.5px;background:#8cc8ec;"></div>
<div class="a" style="left:127px;top:551.5px;width:21px;height:2px;background:repeating-linear-gradient(90deg,#8aaea4 0 6px,#d0e0db 6px 7px,#5fa08d 7px 11px,#d0e0db 11px 12px);"></div>
<div class="a" style="left:177px;top:553.5px;width:22px;height:2px;background:repeating-linear-gradient(90deg,#8aaea4 0 6px,#d0e0db 6px 7px,#5fa08d 7px 11px,#d0e0db 11px 12px);"></div>
<div class="a" style="left:229px;top:556.5px;width:20px;height:2px;background:repeating-linear-gradient(90deg,#8aaea4 0 6px,#d0e0db 6px 7px,#5fa08d 7px 11px,#d0e0db 11px 12px);"></div>
<div class="a" style="left:279px;top:558.5px;width:21px;height:2px;background:repeating-linear-gradient(90deg,#8aaea4 0 6px,#d0e0db 6px 7px,#5fa08d 7px 11px,#d0e0db 11px 12px);"></div>
<div class="a" style="left:330px;top:560.5px;width:20px;height:2px;background:repeating-linear-gradient(90deg,#8aaea4 0 6px,#d0e0db 6px 7px,#5fa08d 7px 11px,#d0e0db 11px 12px);"></div>
<div class="a" style="left:380px;top:563.5px;width:20px;height:2px;background:repeating-linear-gradient(90deg,#8aaea4 0 6px,#d0e0db 6px 7px,#5fa08d 7px 11px,#d0e0db 11px 12px);"></div>
<div class="a" style="left:430px;top:567.5px;width:21px;height:2px;background:repeating-linear-gradient(90deg,#8aaea4 0 6px,#d0e0db 6px 7px,#5fa08d 7px 11px,#d0e0db 11px 12px);"></div>
<div class="a" style="left:480px;top:569.5px;width:20px;height:2px;background:repeating-linear-gradient(90deg,#8aaea4 0 6px,#d0e0db 6px 7px,#5fa08d 7px 11px,#d0e0db 11px 12px);"></div>
<div class="a" style="left:530px;top:572.5px;width:20px;height:2px;background:repeating-linear-gradient(90deg,#8aaea4 0 6px,#d0e0db 6px 7px,#5fa08d 7px 11px,#d0e0db 11px 12px);"></div>
<div class="a" style="left:580px;top:574.5px;width:20px;height:2px;background:repeating-linear-gradient(90deg,#8aaea4 0 6px,#d0e0db 6px 7px,#5fa08d 7px 11px,#d0e0db 11px 12px);"></div>
<div class="a" style="left:630px;top:577.5px;width:20px;height:2px;background:repeating-linear-gradient(90deg,#8aaea4 0 6px,#d0e0db 6px 7px,#5fa08d 7px 11px,#d0e0db 11px 12px);"></div>
<div class="a" style="left:680px;top:534.5px;width:15px;height:2px;background:repeating-linear-gradient(90deg,#8aaea4 0 6px,#d0e0db 6px 7px,#5fa08d 7px 11px,#d0e0db 11px 12px);"></div>
<div class="a" style="left:730px;top:537.2px;width:20px;height:2px;background:repeating-linear-gradient(90deg,#8aaea4 0 6px,#d0e0db 6px 7px,#5fa08d 7px 11px,#d0e0db 11px 12px);"></div>
<div class="a" style="left:780px;top:540.0px;width:33px;height:2px;background:repeating-linear-gradient(90deg,#8aaea4 0 6px,#d0e0db 6px 7px,#5fa08d 7px 11px,#d0e0db 11px 12px);"></div>
<div class="a" style="left:813px;top:540.0px;width:8px;height:2px;background:repeating-linear-gradient(90deg,#8aaea4 0 6px,#d0e0db 6px 7px,#5fa08d 7px 11px,#d0e0db 11px 12px);"></div>
<div class="a" style="left:830px;top:540.0px;width:20px;height:2px;background:repeating-linear-gradient(90deg,#8aaea4 0 6px,#d0e0db 6px 7px,#5fa08d 7px 11px,#d0e0db 11px 12px);"></div>
<div class="a" style="left:880px;top:542.5px;width:20px;height:2px;background:repeating-linear-gradient(90deg,#8aaea4 0 6px,#d0e0db 6px 7px,#5fa08d 7px 11px,#d0e0db 11px 12px);"></div>
<div class="a" style="left:930px;top:545.5px;width:18px;height:2px;background:repeating-linear-gradient(90deg,#8aaea4 0 6px,#d0e0db 6px 7px,#5fa08d 7px 11px,#d0e0db 11px 12px);"></div>
<div class="a" style="left:980px;top:547.5px;width:17px;height:2px;background:repeating-linear-gradient(90deg,#8aaea4 0 6px,#d0e0db 6px 7px,#5fa08d 7px 11px,#d0e0db 11px 12px);"></div>
<div class="a" style="left:1030px;top:550.5px;width:18px;height:2px;background:repeating-linear-gradient(90deg,#8aaea4 0 6px,#d0e0db 6px 7px,#5fa08d 7px 11px,#d0e0db 11px 12px);"></div>
<div class="a" style="left:1080px;top:552.5px;width:19px;height:2px;background:repeating-linear-gradient(90deg,#8aaea4 0 6px,#d0e0db 6px 7px,#5fa08d 7px 11px,#d0e0db 11px 12px);"></div>
<div class="a" style="left:1130px;top:555.5px;width:18px;height:2px;background:repeating-linear-gradient(90deg,#8aaea4 0 6px,#d0e0db 6px 7px,#5fa08d 7px 11px,#d0e0db 11px 12px);"></div>
<div class="a" style="left:1180px;top:558.5px;width:17px;height:2px;background:repeating-linear-gradient(90deg,#8aaea4 0 6px,#d0e0db 6px 7px,#5fa08d 7px 11px,#d0e0db 11px 12px);"></div>
<div class="a" style="left:1307px;top:609px;width:2px;height:8px;background:#2aa3e0;"></div>
<div class="a" style="left:1303px;top:612px;width:1px;height:4px;background:#bbb;"></div>
<div class="a" style="left:1316px;top:627px;width:2px;height:9px;background:#2aa3e0;"></div>
<div class="a" style="left:1310px;top:631px;width:1px;height:3px;background:#bbb;"></div>
<div class="a" style="left:1312px;top:645px;width:3px;height:10px;background:#1b9e8f;"></div>
<div class="a" style="left:1309px;top:650px;width:1px;height:3px;background:#bbb;"></div>
<div class="a" style="left:1322px;top:668px;width:2px;height:10px;background:#2aa3e0;"></div>
<div class="a" style="left:1318px;top:670px;width:2px;height:7px;background:#c45fae;"></div>
<div class="a" style="left:1315px;top:672px;width:1px;height:3px;background:#bbb;"></div>
<div class="a" style="left:1319px;top:687px;width:3px;height:10px;background:#1b9e8f;"></div>
<div class="a" style="left:1317px;top:690px;width:1px;height:3px;background:#bbb;"></div>
<div class="a" style="left:1323px;top:608.6px;width:17px;height:112.4px;background:#f1f1f1;"></div>
<div class="a" style="left:1325px;top:689px;width:12px;height:15.6px;background:#c1c1c1;"></div>
<svg style="left:1327px;top:614px;" width="10" height="6" viewBox="0 0 10 6"><path d="M1 5H9L5 1Z" fill="#505050"/></svg>
<svg style="left:1327px;top:709px;" width="10" height="6" viewBox="0 0 10 6"><path d="M1 1H9L5 5Z" fill="#a3a3a3"/></svg>
<svg style="left:1320px;top:591px;" width="12" height="10" viewBox="0 0 12 10"><path d="M1 9H11L6 1.5Z" fill="#5f6368"/></svg>
<div class="a" style="left:76px;top:727px;width:1px;height:14px;background:#cacdd1;"></div>
<div class="a" style="left:184px;top:727px;width:1px;height:14px;background:#cacdd1;"></div>
<div class="a" style="left:286px;top:727px;width:1px;height:14px;background:#cacdd1;"></div>
<div class="a" style="left:374px;top:727px;width:1px;height:14px;background:#cacdd1;"></div>
<div class="a" style="left:528px;top:727px;width:1px;height:14px;background:#cacdd1;"></div>
<svg style="left:18px;top:764px;" width="16" height="17" viewBox="0 0 16 17"><path d="M3 1H10.5L13.5 4V15H3Z" fill="#fff"/><rect x="1" y="6" width="14.5" height="7" rx="1" fill="#e0211d"/><text x="8.2" y="11.8" font-size="6" font-weight="700" font-family="Liberation Sans" fill="#fff" text-anchor="middle">PDF</text><rect x="3" y="13" width="10.5" height="2.5" fill="#e0211d"/></svg>
<svg style="left:235px;top:764px;" width="16" height="17" viewBox="0 0 16 17"><path d="M3 1H10.5L13.5 4V15H3Z" fill="#fff"/><rect x="1" y="6" width="14.5" height="7" rx="1" fill="#e0211d"/><text x="8.2" y="11.8" font-size="6" font-weight="700" font-family="Liberation Sans" fill="#fff" text-anchor="middle">PDF</text><rect x="3" y="13" width="10.5" height="2.5" fill="#e0211d"/></svg>
<svg style="left:192px;top:769px;" width="12" height="8" viewBox="0 0 12 8"><path d="M1 6.5L6 1.5L11 6.5" fill="none" stroke="#a9b4c4" stroke-width="1.5"/></svg>
<svg style="left:408.8px;top:769px;" width="12" height="8" viewBox="0 0 12 8"><path d="M1 6.5L6 1.5L11 6.5" fill="none" stroke="#a9b4c4" stroke-width="1.5"/></svg>
<svg style="left:453px;top:764px;" width="13" height="17" viewBox="0 0 13 17"><path d="M1 1H8.5L12 4.5V16H1Z" fill="#fff"/><rect x="3" y="8" width="7" height="5" fill="#2f7cc4"/></svg>
<div class="a" style="left:488px;top:767px;width:1.2px;height:10px;background:#c0c0c0;"></div>
<div class="a" style="left:491.5px;top:767px;width:1.2px;height:10px;background:#c0c0c0;"></div>
<svg style="left:1318px;top:768px;" width="11" height="11" viewBox="0 0 11 11"><path d="M1 1L10 10M10 1L1 10" stroke="#c8ced6" stroke-width="1.6"/></svg>
<svg style="left:15px;top:810.5px;" width="15" height="16" viewBox="0 0 15 16"><path d="M0 2.2L6.3 1.3V7.3H0Z M7.4 1.1L15 0V7.3H7.4Z M0 8.4H6.3V14.5L0 13.6Z M7.4 8.4H15V15.7L7.4 14.7Z" fill="#fff"/></svg>
<svg style="left:55px;top:809px;" width="17" height="17" viewBox="0 0 17 17"><circle cx="10.8" cy="7" r="4.9" fill="none" stroke="#333" stroke-width="1.3"/><path d="M7.3 10.5L1.2 16.8" stroke="#333" stroke-width="1.4"/></svg>
<svg style="left:379px;top:810px;" width="16" height="16" viewBox="0 0 16 16"><circle cx="8" cy="8" r="6.5" fill="none" stroke="#fff" stroke-width="1.8"/></svg>
<svg style="left:423px;top:809px;" width="17" height="18" viewBox="0 0 17 18"><path d="M3 3V1.5H12V3M3 14V15.5H12V14" fill="none" stroke="#fff" stroke-width="1.3"/><rect x="2" y="5" width="11" height="7" fill="none" stroke="#fff" stroke-width="1.3"/><circle cx="15" cy="2.5" r="1.2" fill="#fff"/><path d="M15 5.5V15.5" stroke="#fff" stroke-width="1.3"/></svg>
<svg style="left:468px;top:807px;" width="23" height="23" viewBox="0 0 23 23"><rect width="22.2" height="22" rx="2" fill="#3c3c3c"/><path d="M5 8.2 L17 4.2 L17 7.7 L5 11.7Z M5 8.2 L17 12.2 L17 15.7 L5 11.7Z M5 15.7 L17 12.2 L17 15.7 L5 19.2Z" fill="#ff9d0a"/></svg>
<svg style="left:514px;top:808.5px;" width="22" height="20" viewBox="0 0 22 20"><path d="M1 1.5H8L10 3.5H20.5V18H1Z" fill="#e9b524"/><rect x="1" y="4.5" width="19.5" height="13.5" fill="#ffd862"/><path d="M6.3 19.5V12.3H15.2V19.5" fill="none" stroke="#3f95e6" stroke-width="3"/></svg>
<svg style="left:557px;top:806px;" width="28" height="26" viewBox="0 0 28 26"><ellipse cx="13" cy="11.5" rx="10.5" ry="6.3" transform="rotate(-22 13 11.5)" fill="#8a8a8a"/><ellipse cx="13.5" cy="9.5" rx="10.5" ry="6.3" transform="rotate(-22 13.5 9.5)" fill="#f2f2f2" stroke="#c62828" stroke-width="1.2"/><path d="M10 5 L15 14 M16 4.5 L12 14" stroke="#7a7a7a" stroke-width="1.1"/><path d="M15 14 L17.5 19 M12 14 L20.5 17" stroke="#1e88e5" stroke-width="1.3"/><circle cx="17.5" cy="21" r="2.2" fill="none" stroke="#1e88e5" stroke-width="1.4"/><circle cx="22" cy="17.5" r="2.2" fill="none" stroke="#1e88e5" stroke-width="1.4"/></svg>
<div class="a" style="left:594px;top:800px;width:41px;height:37px;background:#4a4a4a;"></div>
<div class="a" style="left:635px;top:800px;width:3px;height:37px;background:#3a3a3a;"></div>
<svg style="left:604.4px;top:807px;" width="24" height="24" viewBox="0 0 24 24"><circle cx="11" cy="11" r="10" fill="#db4437"/><path d="M11 11 L2.3 16 A10 10 0 0 1 2 6 Z" fill="#0f9d58"/><path d="M11 11 L2.3 16 A10 10 0 0 0 19.7 16Z" fill="#0f9d58"/><path d="M11 11 L19.7 16 A10 10 0 0 0 20.5 7 L11 7Z" fill="#ffcd40"/><circle cx="11" cy="11" r="4.6" fill="#fff"/><circle cx="11" cy="11" r="3.6" fill="#4285f4"/><circle cx="17" cy="17" r="6" fill="#bdbdbd"/><circle cx="17" cy="15.3" r="1.8" fill="#555"/><path d="M13.5 20 Q14 17.5 17 17.5 Q20 17.5 20.5 20Z" fill="#555"/></svg>
<svg style="left:651px;top:807px;" width="22" height="22" viewBox="0 0 22 22"><rect width="22" height="22" fill="#bf0000"/><text x="11" y="17" font-size="15" font-style="italic" font-weight="700" font-family="Liberation Sans" fill="#fff" text-anchor="middle">Fz</text></svg>
<svg style="left:696px;top:807px;" width="22" height="22" viewBox="0 0 22 22"><rect x="2" y="1" width="19" height="20" fill="#e8eef8"/><rect x="0" y="4" width="14" height="13" fill="#2b579a" opacity="0"/><text x="10" y="16" font-size="14" font-weight="700" font-family="Liberation Serif" fill="#1f5fbf" text-anchor="middle">W</text><path d="M14 18L20 14" stroke="#9ab" stroke-width="1"/></svg>
<div class="a" style="left:730.7px;top:800px;width:44.3px;height:37px;background:#a4581f;"></div>
<svg style="left:743px;top:807px;" width="21" height="21" viewBox="0 0 21 21"><rect width="21" height="21" rx="1" fill="#fcd800"/><path d="M21 10L10 21H21Z" fill="#333"/><path d="M10 21V10H21" fill="#f6c200"/><path d="M12 21 L21 12 V21Z" fill="#2a2a2a"/></svg>
<div class="a" style="left:730.7px;top:835px;width:44.3px;height:2px;background:#f7630c;"></div>
<svg style="left:787px;top:807px;" width="24" height="24" viewBox="0 0 24 24"><circle cx="11" cy="11" r="10" fill="#db4437"/><path d="M11 11 L2.3 16 A10 10 0 0 1 2 6 Z" fill="#0f9d58"/><path d="M11 11 L2.3 16 A10 10 0 0 0 19.7 16Z" fill="#0f9d58"/><path d="M11 11 L19.7 16 A10 10 0 0 0 20.5 7 L11 7Z" fill="#ffcd40"/><circle cx="11" cy="11" r="4.6" fill="#fff"/><circle cx="11" cy="11" r="3.6" fill="#4285f4"/><circle cx="17" cy="17" r="6" fill="#2b2b2b"/><circle cx="17" cy="15.3" r="1.8" fill="#fff"/><path d="M13.5 20 Q14 17.5 17 17.5 Q20 17.5 20.5 20Z" fill="#fff"/></svg>
<div class="a" style="left:461px;top:835px;width:37px;height:2px;background:#76b9ed;"></div>
<div class="a" style="left:506px;top:835px;width:37px;height:2px;background:#76b9ed;"></div>
<div class="a" style="left:594px;top:835px;width:44px;height:2px;background:#76b9ed;"></div>
<div class="a" style="left:643px;top:835px;width:37px;height:2px;background:#76b9ed;"></div>
<div class="a" style="left:780px;top:835px;width:37px;height:2px;background:#76b9ed;"></div>
<svg style="left:1055.5px;top:809.5px;" width="19" height="19" viewBox="0 0 19 19"><defs><radialGradient id="sg" cx="0.35" cy="0.3" r="0.8"><stop offset="0" stop-color="#ffe680"/><stop offset="1" stop-color="#f5a200"/></radialGradient></defs><circle cx="9.5" cy="9.5" r="9" fill="url(#sg)"/></svg>
<svg style="left:1168px;top:812px;" width="14" height="9" viewBox="0 0 14 9"><path d="M1 7.5L7 1.5L13 7.5" fill="none" stroke="#fff" stroke-width="1.4"/></svg>
<svg style="left:1189px;top:810px;" width="17" height="18" viewBox="0 0 17 18"><rect x="4" y="2" width="12" height="10" fill="none" stroke="#fff" stroke-width="1.2"/><rect x="1" y="1" width="4" height="5" fill="#222" stroke="#fff" stroke-width="1"/><path d="M10 12V15M6 16H14" stroke="#fff" stroke-width="1.2"/></svg>
<svg style="left:1212px;top:810px;" width="18" height="17" viewBox="0 0 18 17"><path d="M1 6H4L8 2V15L4 11H1Z" fill="none" stroke="#fff" stroke-width="1.2"/><path d="M10.5 5.5 Q12 8.5 10.5 11.5M13 3.5 Q15.5 8.5 13 13.5M15.5 2 Q18.5 8.5 15.5 15" fill="none" stroke="#fff" stroke-width="1.1"/></svg>
<svg style="left:1300px;top:808px;" width="24" height="24" viewBox="0 0 24 24"><path d="M1.5 2H16.5V12H8L5 15V12H1.5Z" fill="#fff"/><path d="M4 5H14M4 7.5H14M4 10H11" stroke="#222" stroke-width="1"/><circle cx="16" cy="17" r="6.6" fill="#222" stroke="#9a9a9a" stroke-width="1"/><text x="16" y="21" font-size="10.5" font-weight="700" font-family="Liberation Sans" fill="#fff" text-anchor="middle">2</text></svg>
<div class="a" style="left:1337px;top:800px;width:1px;height:37px;background:#555;"></div>
<svg style="left:801.5px;top:589.5px;" width="14" height="20" viewBox="0 0 14 20"><path d="M1 1 L1 16.6 L5.1 13.5 L8 18 L10.1 16.8 L7.3 12.6 L11.8 12.4 Z" fill="#fff" stroke="#1e1e1e" stroke-width="1.1" stroke-linejoin="round"/></svg>
</body></html>
